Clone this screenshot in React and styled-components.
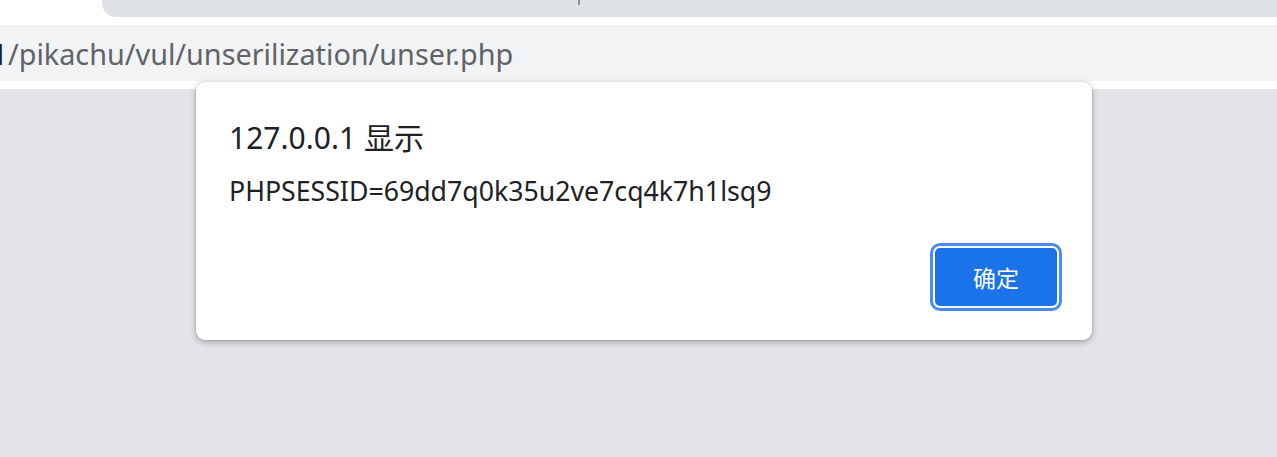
import React from "react";
import styled, { createGlobalStyle } from "styled-components";

const GlobalStyle = createGlobalStyle`
  html, body {
    margin: 0;
    padding: 0;
  }
  body {
    background: #e3e4e8;
    font-family: "Noto Sans", "Noto Sans CJK SC", sans-serif;
    overflow: hidden;
  }
`;

const Browser = styled.div`
  position: relative;
  width: 1277px;
  height: 457px;
  display: flex;
  flex-direction: column;
  overflow: hidden;
  background: #e3e4e8;
`;

const TabStrip = styled.div`
  height: 17px;
  display: flex;
  padding-left: 102px;
  background: #fff;
`;

const TabBar = styled.div`
  flex: 1;
  padding-left: 476px;
  background: #dee1e6;
  border-bottom-left-radius: 14px;
`;

const Separator = styled.div`
  width: 2px;
  height: 5px;
  background: #8d9196;
`;

const Toolbar = styled.div`
  padding: 8px 0;
  background: #fff;
`;

const AddressBar = styled.div`
  height: 56px;
  display: flex;
  align-items: center;
  overflow: hidden;
  white-space: nowrap;
  background: #f1f3f4;
  font-size: 28.8px;
  color: #5f6368;
`;

const Host = styled.span`
  margin-left: ${(p) => p.$shift}px;
  color: #202124;
`;

const Page = styled.div`
  flex: 1;
  background: #e3e4e8;
`;

const Dialog = styled.div`
  position: absolute;
  left: 196px;
  top: 82px;
  width: 896px;
  height: 258px;
  box-sizing: border-box;
  padding: 36px 33px 32px 33px;
  display: flex;
  flex-direction: column;
  background: #fff;
  border-radius: 9px;
  box-shadow: 0 2px 6px rgba(0, 0, 0, 0.3), 0 0 0 1px rgba(0, 0, 0, 0.06);
`;

const Title = styled.div`
  font-size: 30px;
  line-height: 40px;
  color: #202124;
`;

const Message = styled.div`
  margin-top: 17px;
  font-size: 26.7px;
  line-height: 32px;
  color: #202124;
`;

const Actions = styled.div`
  margin-top: auto;
  display: flex;
  justify-content: flex-end;
`;

const OkButton = styled.button`
  width: 126px;
  height: 62px;
  border: 2px solid #fff;
  border-radius: 7px;
  box-shadow: 0 0 0 3px #4a8af4;
  background: #1a73e8;
  color: #fff;
  font-family: "Noto Sans CJK SC", sans-serif;
  font-size: 23px;
  padding: 0;
  cursor: pointer;
`;

export default function App() {
  return (
    <>
      <GlobalStyle />
      <Browser>
        <TabStrip>
          <TabBar>
            <Separator />
          </TabBar>
        </TabStrip>
        <Toolbar>
          <AddressBar>
            <Host $shift={-114}>127.0.0.1</Host>
            <span>/pikachu/vul/unserilization/unser.php</span>
          </AddressBar>
        </Toolbar>
        <Page />
        <Dialog role="alertdialog">
          <Title>127.0.0.1 显示</Title>
          <Message>PHPSESSID=69dd7q0k35u2ve7cq4k7h1lsq9</Message>
          <Actions>
            <OkButton>确定</OkButton>
          </Actions>
        </Dialog>
      </Browser>
    </>
  );
}
